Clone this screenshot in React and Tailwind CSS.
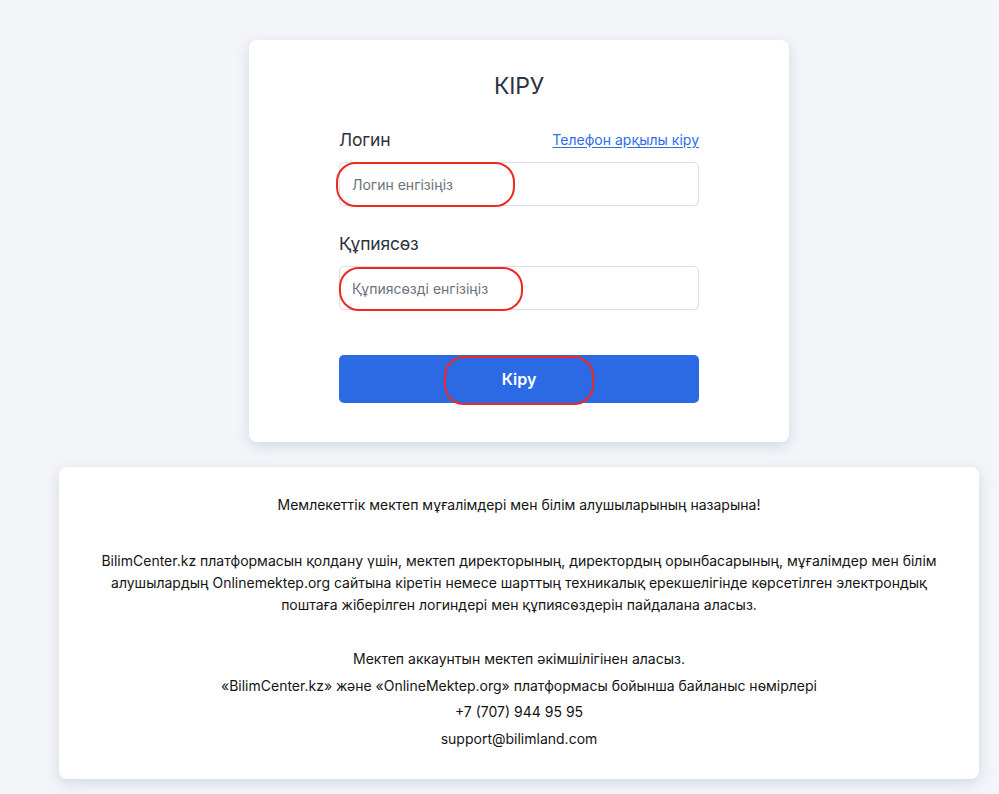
export default function App() {
  const font = { fontFamily: "Inter, 'Noto Sans', 'Liberation Sans', sans-serif" };
  return (
    <div className="min-h-[794px] w-full bg-[#f3f5f9] pl-[59px] pr-[20px] pt-[40px] pb-[16px]" style={font}>
      <div className="mx-auto w-[540px] rounded-lg bg-white px-[90px] pt-[30px] pb-[39px] shadow-[0_4px_14px_rgba(148,163,184,0.35)]">
        <h1 className="text-center text-[23px] leading-[32px] font-normal tracking-[-0.01em] text-[#2d3340]">КІРУ</h1>

        <div className="mt-[24px] flex items-center justify-between h-[28px]">
          <span className="text-[17.5px] leading-[28px] tracking-[-0.01em] text-[#2d3340]">Логин</span>
          <a href="#" className="text-[14px] leading-[20px] text-[#2f6fe4] underline underline-offset-2">Телефон арқылы кіру</a>
        </div>
        <div className="relative mt-[8px]">
          <input
            className="h-[44px] w-full rounded-[5px] border border-[#dcdfe4] bg-white px-[12px] text-[14px] text-[#374151] placeholder:text-[#6b7280] outline-none shadow-[0_1px_2px_rgba(0,0,0,0.04)]"
            placeholder="Логин енгізіңіз"
          />
          <div className="pointer-events-none absolute left-[-3px] top-0 h-[45px] w-[179px] rounded-[20px] border-2 border-[#ec2a22]" />
        </div>

        <div className="mt-[24px] h-[28px] text-[17.5px] leading-[28px] tracking-[-0.01em] text-[#2d3340]">Құпиясөз</div>
        <div className="relative mt-[8px]">
          <input
            type="password"
            className="h-[44px] w-full rounded-[5px] border border-[#dcdfe4] bg-white px-[12px] text-[14px] text-[#374151] placeholder:text-[#6b7280] outline-none shadow-[0_1px_2px_rgba(0,0,0,0.04)]"
            placeholder="Құпиясөзді енгізіңіз"
          />
          <div className="pointer-events-none absolute left-0 top-[1px] h-[44px] w-[184px] rounded-[20px] border-2 border-[#ec2a22]" />
        </div>

        <div className="relative mt-[45px]">
          <button className="h-[48px] w-full rounded-[5px] bg-[#2c69e5] text-[16px] font-semibold text-white">Кіру</button>
          <div className="pointer-events-none absolute left-[105px] top-[1px] h-[49px] w-[150px] rounded-[20px] border-2 border-[#ec2a22]" />
        </div>
      </div>

      <div className="mt-[25px] rounded-lg bg-white px-[30px] pt-[27px] pb-[27px] text-center text-[14px] text-[#141414] shadow-[0_4px_14px_rgba(148,163,184,0.35)]">
        <p className="leading-[22px]">Мемлекеттік мектеп мұғалімдері мен білім алушыларының назарына!</p>
        <p className="mt-[34px] mx-auto max-w-[860px] leading-[22px]">
          BilimCenter.kz платформасын қолдану үшін, мектеп директорының, директордың орынбасарының, мұғалімдер мен білім алушылардың Onlinemektep.org сайтына кіретін немесе шарттың техникалық ерекшелігінде көрсетілген электрондық поштаға жіберілген логиндері мен құпиясөздерін пайдалана аласыз.
        </p>
        <div className="mt-[30px] leading-[26.6px]">
          <p>Мектеп аккаунтын мектеп әкімшілігінен аласыз.</p>
          <p>«BilimCenter.kz» және «OnlineMektep.org» платформасы бойынша байланыс нөмірлері</p>
          <p>+7 (707) 944 95 95</p>
          <p>support@bilimland.com</p>
        </div>
      </div>
    </div>
  );
}
